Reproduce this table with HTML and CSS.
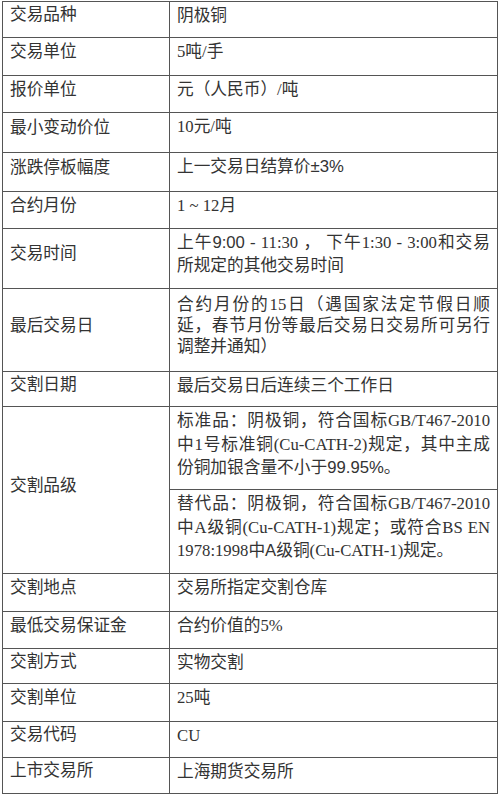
FILE: index.html
```html
<!DOCTYPE html>
<html lang="zh-CN">
<head>
<meta charset="utf-8">
<title>阴极铜期货合约</title>
<link rel="stylesheet" href="styles.css">
</head>
<body>
<div class="spec">
  <div class="k">交易品种</div><div class="v">阴极铜</div>
  <div class="k">交易单位</div><div class="v">5吨/手</div>
  <div class="k">报价单位</div><div class="v">元（人民币）/吨</div>
  <div class="k">最小变动价位</div><div class="v">10元/吨</div>
  <div class="k">涨跌停板幅度</div><div class="v">上一交易日结算价<span class="sans">±3%</span></div>
  <div class="k">合约月份</div><div class="v">1 ~ 12月</div>
  <div class="k">交易时间</div>
  <div class="v"><span class="ln">上午<span class="sans">9:00</span> - 11:30 ， 下午1:30 - 3:00和交易</span>所规定的其他交易时间</div>
  <div class="k">最后交易日</div>
  <div class="v wide"><span class="ln">合约月份的15日（遇国家法定节假日顺</span><span class="ln">延，春节月份等最后交易日交易所可另行</span>调整并通知）</div>
  <div class="k">交割日期</div><div class="v">最后交易日后连续三个工作日</div>
  <div class="k span2">交割品级</div>
  <div class="v tall"><span class="ln">标准品：阴极铜，符合国标GB/T467-2010</span><span class="ln">中1号标准铜(Cu-CATH-2)规定，其中主成</span>份铜加银含量不小于<span class="sans">99.95%</span>。</div>
  <div class="v tall"><span class="ln">替代品：阴极铜，符合国标GB/T467-2010</span><span class="ln">中A级铜(Cu-CATH-1)规定；或符合BS EN</span>1978:1998中<span class="sans">A</span>级铜(Cu-CATH-1)规定。</div>
  <div class="k">交割地点</div><div class="v">交易所指定交割仓库</div>
  <div class="k">最低交易保证金</div><div class="v">合约价值的5%</div>
  <div class="k">交割方式</div><div class="v">实物交割</div>
  <div class="k">交割单位</div><div class="v">25吨</div>
  <div class="k">交易代码</div><div class="v">CU</div>
  <div class="k">上市交易所</div><div class="v">上海期货交易所</div>
</div>
</body>
</html>
```
FILE: styles.css
```css
* { box-sizing: border-box; }
html, body { margin: 0; padding: 0; background: #fff; }
body {
  font-family: "Liberation Serif", "Noto Sans CJK SC", serif;
  font-size: 16.7px;
  color: #333;
}
.spec {
  margin: 1px 0 0 2px;
  width: 496px;
  display: grid;
  grid-template-columns: 167px 328px;
  grid-template-rows: 36px 38px 37px 40px 39px 37px 60px 83px 35px 83px 84px 38px 37px 35px 38px 36px 36px;
  border-top: 1px solid #555;
  border-left: 1px solid #555;
}
.k, .v {
  border-right: 1px solid #555;
  border-bottom: 1px solid #555;
  line-height: 23px;
  white-space: nowrap;
}
.k {
  display: flex;
  align-items: center;
  padding: 0 6px 12px 7px;
  font-family: "Noto Sans CJK SC", sans-serif;
}
.v {
  padding: 2px 7px 0 7px;
}
.ln {
  display: block;
  text-align: justify;
  text-align-last: justify;
}
.span2 { grid-row: span 2; }
.wide {
  line-height: 21px;
  padding-top: 5px;
}
.tall { line-height: 23.5px; }
.sans { font-family: "Liberation Sans", sans-serif; }
```
